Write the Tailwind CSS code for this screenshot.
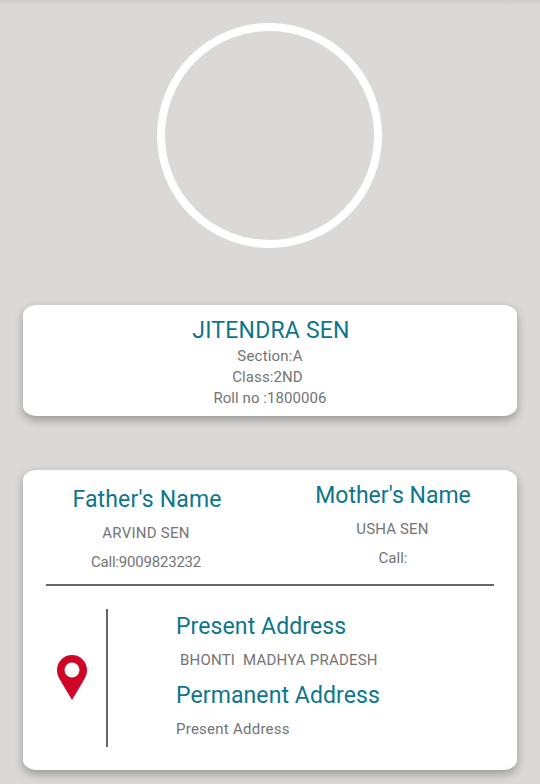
<!DOCTYPE html>
<html lang="en">
<head>
    <meta charset="UTF-8">
    <meta name="viewport" content="width=device-width, initial-scale=1.0">
    <title>Student Profile</title>
    <script src="https://cdn.jsdelivr.net/npm/@tailwindcss/browser@4"></script>
</head>
<body class="bg-[#dad9d7] font-[Roboto,sans-serif] text-[15px] leading-[21px] text-[#747474] h-[784px] overflow-hidden">
    <div class="h-[6px] bg-gradient-to-b from-[#cfcecc] to-[#dad9d7]"></div>

    <!-- Photo -->
    <div class="w-[225px] h-[225px] mt-[17px] ml-[157px] rounded-full border-8 border-white"></div>

    <!-- Student -->
    <div class="mx-[23px] mt-[57px] h-[111px] pt-[11px] bg-white rounded-[14px/10px] shadow-[0_4px_10px_rgba(0,0,0,0.3)] text-center">
        <h1 class="mb-px pl-[2px] text-[23px] leading-[29px] tracking-[0.2px] text-[#0d768c]">JITENDRA SEN</h1>
        <p class="tracking-[0.2px]">Section:A</p>
        <p class="pr-[5px] tracking-[0.1px]">Class:2ND</p>
        <p class="tracking-[0.07px]">Roll no :1800006</p>
    </div>

    <!-- Parents and address -->
    <div class="mx-[23px] mt-[54px] h-[300px] px-[23px] bg-white rounded-[14px/10px] shadow-[0_4px_10px_rgba(0,0,0,0.3)]">
        <div class="flex justify-between h-[114px] text-center">
            <div class="w-[200px] pt-[15px]">
                <h2 class="pl-[2px] text-[23px] leading-[29px] tracking-[0.15px] text-[#0d768c]">Father's Name</h2>
                <p class="mt-[9px] tracking-[0.25px]">ARVIND SEN</p>
                <p class="mt-2 tracking-[-0.2px]">Call:9009823232</p>
            </div>
            <div class="w-[202px] pt-[11px]">
                <h2 class="text-[23px] leading-[29px] text-[#0d768c]">Mother's Name</h2>
                <p class="mt-[9px] pr-px tracking-[0.15px]">USHA SEN</p>
                <p class="mt-2">Call:</p>
            </div>
        </div>
        <div class="h-[2px] bg-[#666]"></div>
        <div class="flex mt-[23px] h-[138px]">
            <div class="w-[60px] pl-[11px] pt-[46px]">
                <svg width="30" height="45" viewBox="0 0 30 45" fill="#cf0528">
                    <path fill-rule="evenodd" d="M15 0A15 15 0 0 0 0 15C0 18.500 1 21 2.500 24L15 45L27.500 24C29 21 30 18.500 30 15A15 15 0 0 0 15 0ZM15 7.500A7.500 7.500 0 1 1 15 22.500A7.500 7.500 0 1 1 15 7.500Z"/>
                </svg>
            </div>
            <div class="w-[2px] bg-[#666]"></div>
            <div class="ml-[68px] pt-[3px]">
                <h2 class="text-[23px] leading-[29px] tracking-[0.1px] text-[#0d768c]">Present Address</h2>
                <p class="mt-[9px] tracking-[0.22px] whitespace-pre"> BHONTI  MADHYA PRADESH</p>
                <h2 class="mt-[10px] text-[23px] leading-[29px] tracking-[0.1px] text-[#0d768c]">Permanent Address</h2>
                <p class="mt-[9px] tracking-[0.25px]">Present Address</p>
            </div>
        </div>
    </div>
</body>
</html>
